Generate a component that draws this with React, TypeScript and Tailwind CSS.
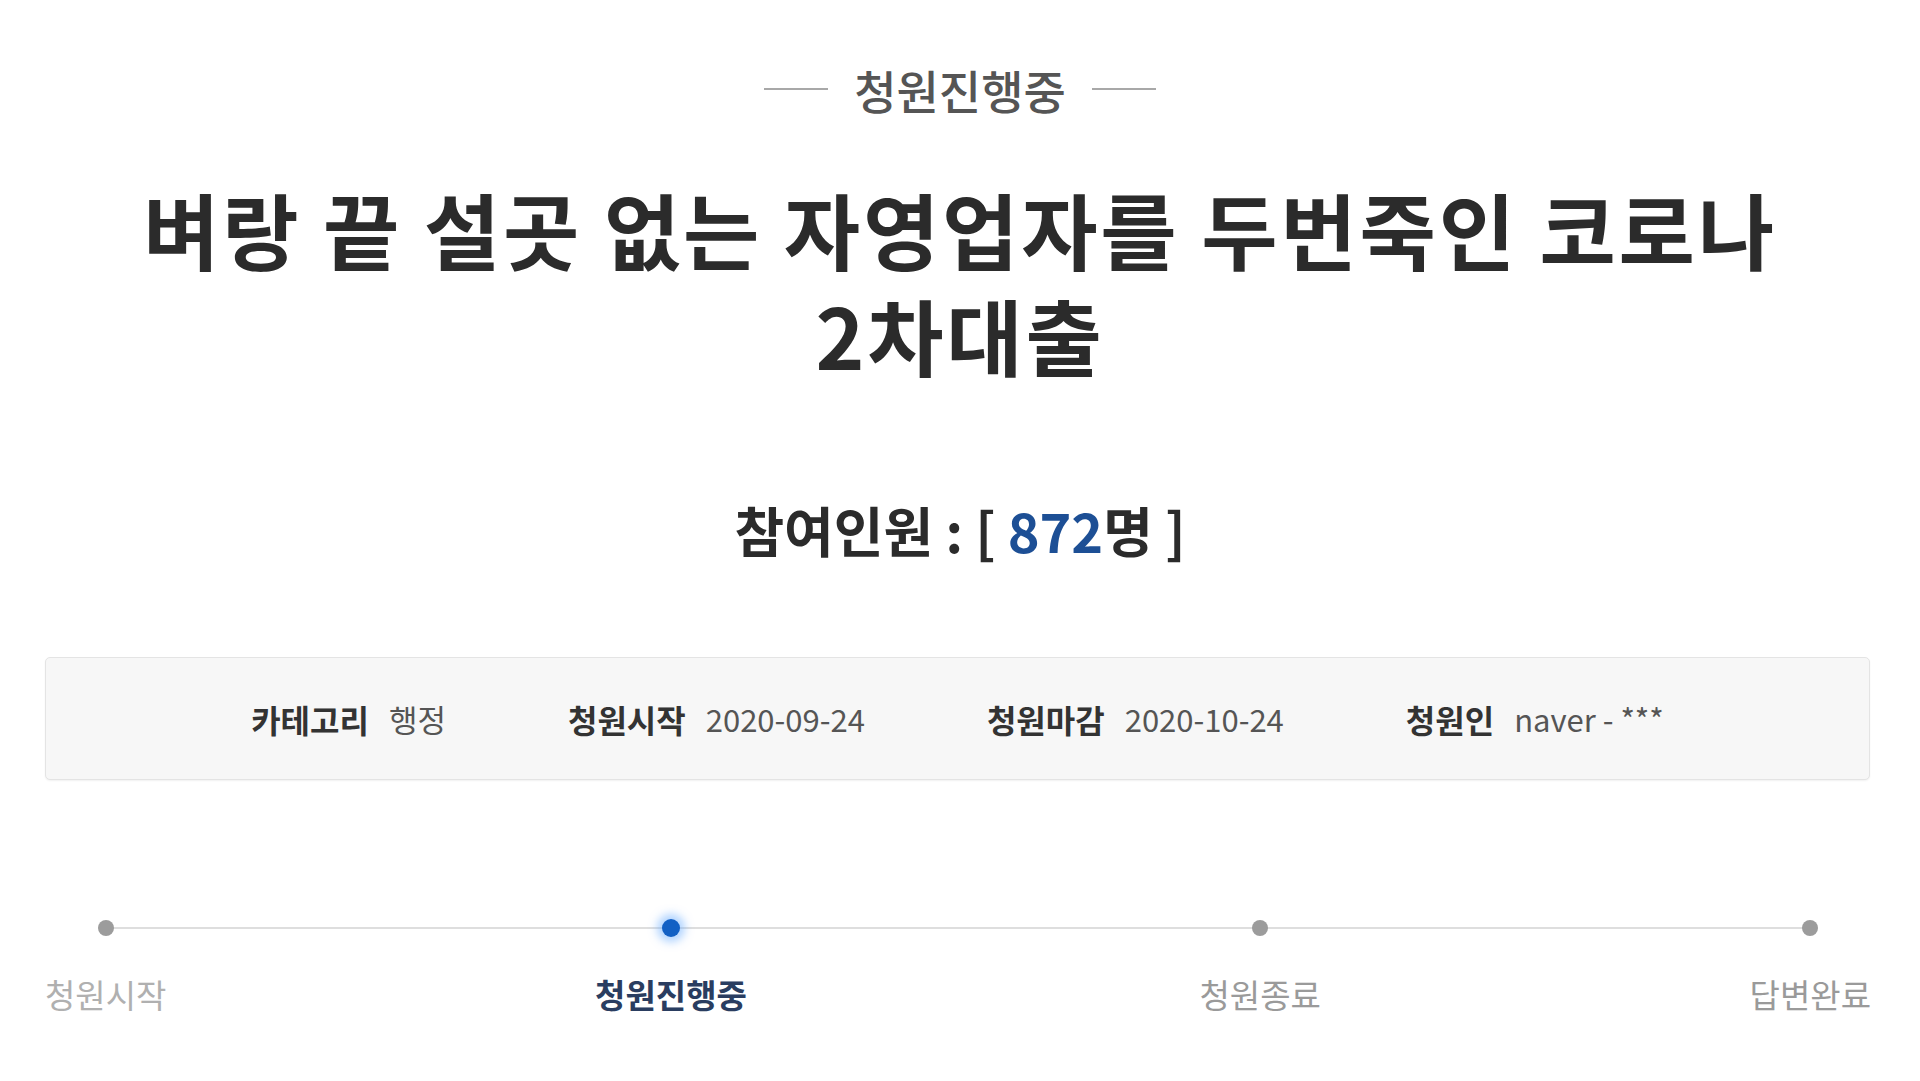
import React from 'react';

const steps = [
  { label: '청원시작', active: false, tone: 'text-[#b0b0b0]' },
  { label: '청원진행중', active: true, tone: 'text-[#2a3d60] font-bold' },
  { label: '청원종료', active: false, tone: 'text-[#9a9a9a]' },
  { label: '답변완료', active: false, tone: 'text-[#9a9a9a]' },
];

const info = [
  { label: '카테고리', value: '행정' },
  { label: '청원시작', value: '2020-09-24' },
  { label: '청원마감', value: '2020-10-24' },
  { label: '청원인', value: 'naver - ***' },
];

export default function App() {
  return (
    <div className="min-h-screen bg-white font-['Noto_Sans_CJK_KR',sans-serif] text-[#2d2d2d]">
      {/* Status */}
      <div className="h-[178px] flex items-center justify-center gap-[26px]">
        <span className="w-[64px] h-[2px] bg-[#a8a8a8]" />
        <span className="text-[46px] leading-none font-medium text-[#555]">청원진행중</span>
        <span className="w-[64px] h-[2px] bg-[#a8a8a8]" />
      </div>

      {/* Title */}
      <h1 className="-mt-[3px] text-center text-[83px] leading-[106px] font-bold tracking-[2.8px] text-[#2b2b2b]">
        <div>벼랑 끝 설곳 없는 자영업자를 두번죽인 코로나</div>
        <div>2차대출</div>
      </h1>

      {/* Participants */}
      <div className="mt-[113px] h-[60px] flex items-center justify-center text-[54px] font-bold leading-none text-[#2b2b2b]">
        <span>참여인원 : [ </span>
        <span className="text-[#1d4f95] ml-[12px]">872</span>
        <span>명 ]</span>
      </div>

      {/* Info box */}
      <div className="mt-[97px] ml-[45px] mr-[50px] h-[123px] rounded-[5px] border border-[#e4e4e4] bg-[#f7f7f7] shadow-[0_1px_2px_rgba(0,0,0,0.06)] flex items-center justify-center gap-[122px]">
        {info.map((it) => (
          <div key={it.label} className="flex items-center gap-[20px] leading-none">
            <span className="text-[32px] font-bold text-[#333]">{it.label}</span>
            <span className="text-[31px] text-[#555]">{it.value}</span>
          </div>
        ))}
      </div>

      {/* Progress */}
      <div className="relative mt-[140px] ml-[45px] mr-[49px] flex justify-between">
        <div className="absolute left-[60px] right-[60px] top-[7px] h-[2px] bg-[#dedede]" />
        {steps.map((s, i) => (
          <div key={s.label} className={`relative flex flex-col items-center ${i === 1 ? 'mr-[24px]' : ''}`}>
            <div className="h-[16px] flex items-center justify-center">
              {s.active ? (
                <span className="w-[18px] h-[18px] rounded-full bg-[#1260c4] shadow-[0_0_8px_5px_rgba(100,170,255,0.5)]" />
              ) : (
                <span className="w-[16px] h-[16px] rounded-full bg-[#9c9c9c]" />
              )}
            </div>
            <span className={`mt-[38px] text-[33px] leading-[40px] ${s.tone}`}>{s.label}</span>
          </div>
        ))}
      </div>
    </div>
  );
}
